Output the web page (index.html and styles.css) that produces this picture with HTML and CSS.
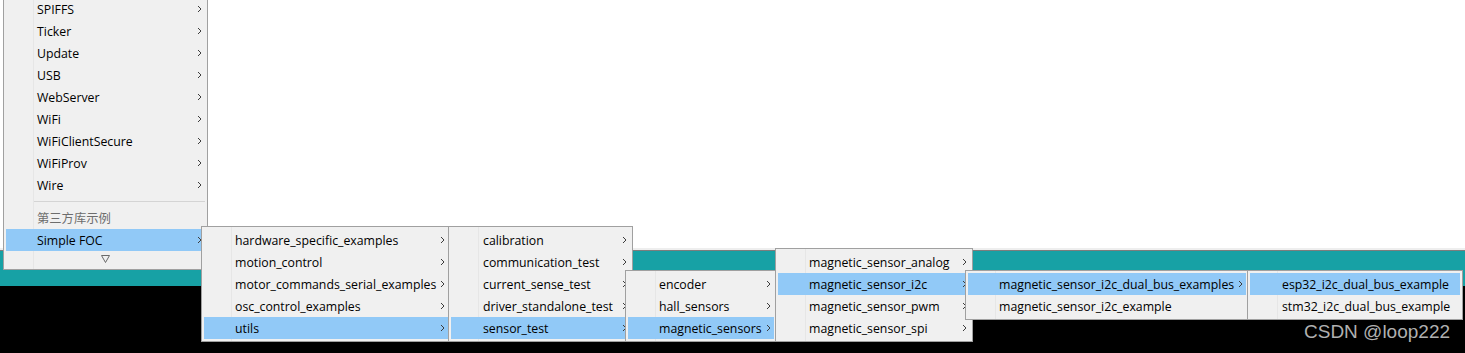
FILE: index.html
```html
<!DOCTYPE html>
<html lang="zh-CN">
<head>
<meta charset="utf-8">
<title>Examples menu</title>
<link rel="stylesheet" href="styles.css">
</head>
<body>
<div class="stage">
  <div class="editor"></div>
  <div class="strip-light"></div>
  <div class="strip-dark"></div>
  <div class="console-bar"></div>
  <div class="console"></div>

  <div class="menu m1">
    <div class="item"><span>SPIFFS</span><svg class="arrow" viewBox="0 0 5 8"><polyline points="1,1 4,4 1,7"/></svg></div>
    <div class="item"><span>Ticker</span><svg class="arrow" viewBox="0 0 5 8"><polyline points="1,1 4,4 1,7"/></svg></div>
    <div class="item"><span>Update</span><svg class="arrow" viewBox="0 0 5 8"><polyline points="1,1 4,4 1,7"/></svg></div>
    <div class="item"><span>USB</span><svg class="arrow" viewBox="0 0 5 8"><polyline points="1,1 4,4 1,7"/></svg></div>
    <div class="item"><span>WebServer</span><svg class="arrow" viewBox="0 0 5 8"><polyline points="1,1 4,4 1,7"/></svg></div>
    <div class="item"><span>WiFi</span><svg class="arrow" viewBox="0 0 5 8"><polyline points="1,1 4,4 1,7"/></svg></div>
    <div class="item"><span>WiFiClientSecure</span><svg class="arrow" viewBox="0 0 5 8"><polyline points="1,1 4,4 1,7"/></svg></div>
    <div class="item"><span>WiFiProv</span><svg class="arrow" viewBox="0 0 5 8"><polyline points="1,1 4,4 1,7"/></svg></div>
    <div class="item"><span>Wire</span><svg class="arrow" viewBox="0 0 5 8"><polyline points="1,1 4,4 1,7"/></svg></div>
    <div class="sep"></div>
    <div class="item disabled"><span>第三方库示例</span></div>
    <div class="item hl"><span>Simple FOC</span><svg class="arrow" viewBox="0 0 5 8"><polyline points="1,1 4,4 1,7"/></svg></div>
    <div class="more"><svg viewBox="0 0 9 8"><polygon points="0.5,0.5 8.5,0.5 4.5,7.5"/></svg></div>
  </div>

  <div class="menu m2">
    <div class="item"><span>hardware_specific_examples</span><svg class="arrow" viewBox="0 0 5 8"><polyline points="1,1 4,4 1,7"/></svg></div>
    <div class="item"><span>motion_control</span><svg class="arrow" viewBox="0 0 5 8"><polyline points="1,1 4,4 1,7"/></svg></div>
    <div class="item"><span>motor_commands_serial_examples</span><svg class="arrow" viewBox="0 0 5 8"><polyline points="1,1 4,4 1,7"/></svg></div>
    <div class="item"><span>osc_control_examples</span><svg class="arrow" viewBox="0 0 5 8"><polyline points="1,1 4,4 1,7"/></svg></div>
    <div class="item hl"><span>utils</span><svg class="arrow" viewBox="0 0 5 8"><polyline points="1,1 4,4 1,7"/></svg></div>
  </div>

  <div class="menu m3">
    <div class="item"><span>calibration</span><svg class="arrow" viewBox="0 0 5 8"><polyline points="1,1 4,4 1,7"/></svg></div>
    <div class="item"><span>communication_test</span><svg class="arrow" viewBox="0 0 5 8"><polyline points="1,1 4,4 1,7"/></svg></div>
    <div class="item"><span>current_sense_test</span><svg class="arrow" viewBox="0 0 5 8"><polyline points="1,1 4,4 1,7"/></svg></div>
    <div class="item"><span>driver_standalone_test</span><svg class="arrow" viewBox="0 0 5 8"><polyline points="1,1 4,4 1,7"/></svg></div>
    <div class="item hl"><span>sensor_test</span><svg class="arrow" viewBox="0 0 5 8"><polyline points="1,1 4,4 1,7"/></svg></div>
  </div>

  <div class="menu m4">
    <div class="item"><span>encoder</span><svg class="arrow" viewBox="0 0 5 8"><polyline points="1,1 4,4 1,7"/></svg></div>
    <div class="item"><span>hall_sensors</span><svg class="arrow" viewBox="0 0 5 8"><polyline points="1,1 4,4 1,7"/></svg></div>
    <div class="item hl"><span>magnetic_sensors</span><svg class="arrow" viewBox="0 0 5 8"><polyline points="1,1 4,4 1,7"/></svg></div>
  </div>

  <div class="menu m5">
    <div class="item"><span>magnetic_sensor_analog</span><svg class="arrow" viewBox="0 0 5 8"><polyline points="1,1 4,4 1,7"/></svg></div>
    <div class="item hl"><span>magnetic_sensor_i2c</span><svg class="arrow" viewBox="0 0 5 8"><polyline points="1,1 4,4 1,7"/></svg></div>
    <div class="item"><span>magnetic_sensor_pwm</span><svg class="arrow" viewBox="0 0 5 8"><polyline points="1,1 4,4 1,7"/></svg></div>
    <div class="item"><span>magnetic_sensor_spi</span><svg class="arrow" viewBox="0 0 5 8"><polyline points="1,1 4,4 1,7"/></svg></div>
  </div>

  <div class="menu m6">
    <div class="item hl"><span>magnetic_sensor_i2c_dual_bus_examples</span><svg class="arrow" viewBox="0 0 5 8"><polyline points="1,1 4,4 1,7"/></svg></div>
    <div class="item"><span>magnetic_sensor_i2c_example</span></div>
  </div>

  <div class="menu m7">
    <div class="item hl"><span>esp32_i2c_dual_bus_example</span></div>
    <div class="item"><span>stm32_i2c_dual_bus_example</span></div>
  </div>

  <div class="watermark">CSDN @loop222</div>
</div>
</body>
</html>
```

FILE: styles.css
```css
html, body {
  margin: 0;
  padding: 0;
  background: #000;
}

.stage {
  position: relative;
  width: 1465px;
  height: 353px;
  overflow: hidden;
  display: flex;
  flex-direction: column;
}

.editor {
  height: 248px;
  background: #ffffff;
}

.strip-light {
  height: 2px;
  background: #eeeeee;
}

.strip-dark {
  height: 1px;
  background: #7d7d7d;
}

.console-bar {
  height: 35px;
  background: #17a1a5;
}

.console {
  flex: 1;
  background: #000000;
}

.menu {
  position: absolute;
  box-sizing: border-box;
  background: #f0f0f0;
  border: 1px solid #a0a0a0;
  padding: 2px;
  font-family: "Open Sans", "Noto Sans", "Noto Sans CJK SC", sans-serif;
  font-size: 12.3px;
  color: #000;
}

.menu::before {
  content: "";
  position: absolute;
  top: 0;
  bottom: 0;
  left: 29px;
  width: 1px;
  background: #e6e6e6;
}

.m1 { left: 3px;    top: -5px;  width: 205px; }
.m2 { left: 201px;  top: 226px; width: 250px; }
.m3 { left: 448px;  top: 226px; width: 185px; }
.m4 { left: 625px;  top: 270px; width: 152px; }
.m5 { left: 775px;  top: 248px; width: 198px; }
.m6 { left: 965px;  top: 270px; width: 284px; }
.m7 { left: 1247px; top: 270px; width: 216px; }

.item {
  position: relative;
  height: 22px;
  line-height: 22px;
  padding-left: 31px;
  padding-right: 3px;
  display: flex;
  align-items: center;
  justify-content: space-between;
  white-space: nowrap;
}

.m3 .item,
.m7 .item {
  padding-left: 32px;
}

.item span {
  position: relative;
  top: 1px;
}

.item.hl {
  background: #91c9f7;
}

.item.disabled {
  color: #6d6d6d;
}

.arrow {
  width: 5px;
  height: 8px;
  flex: none;
  fill: none;
  stroke: #3c3c3c;
  stroke-width: 1;
}

.sep {
  position: relative;
  height: 11px;
}

.sep::after {
  content: "";
  position: absolute;
  left: 28px;
  right: 0;
  top: 5px;
  height: 1px;
  background: #d4d4d4;
}

.more {
  position: relative;
  height: 16px;
  display: flex;
  align-items: center;
  justify-content: center;
}

.more svg {
  width: 9px;
  height: 8px;
  fill: none;
  stroke: #6a6a6a;
  stroke-width: 1;
}

.watermark {
  position: absolute;
  left: 1304px;
  top: 322px;
  font-family: "Liberation Sans", Arial, sans-serif;
  font-size: 19px;
  line-height: 19px;
  color: #b0b0b0;
  white-space: nowrap;
}
```
